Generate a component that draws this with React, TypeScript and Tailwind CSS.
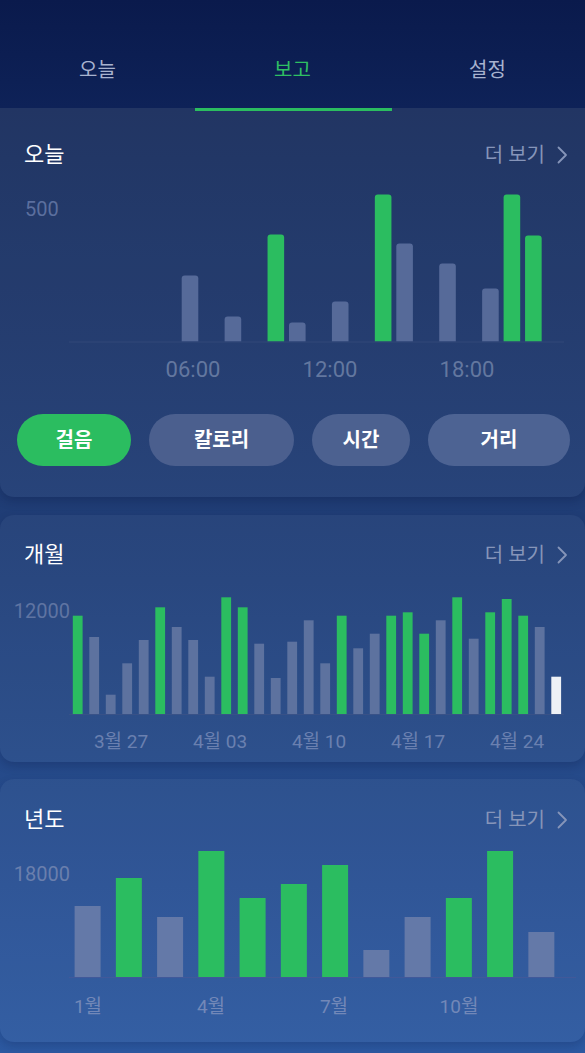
import React from "react";

const FONT = "Roboto, 'Noto Sans CJK KR', sans-serif";

const GREEN = "#2bbd60";

function topRounded(x: number, yTop: number, w: number, yBottom: number, r: number) {
  return `M${x},${yBottom} V${yTop + r} Q${x},${yTop} ${x + r},${yTop} H${x + w - r} Q${x + w},${yTop} ${x + w},${yTop + r} V${yBottom} Z`;
}

function Chevron() {
  return (
    <svg width="11" height="18" viewBox="0 0 11 18" className="ml-[12px]">
      <polyline points="1.5,1.5 9,9 1.5,16.5" fill="none" stroke="#8695b9" strokeWidth="1.8" strokeLinecap="round" strokeLinejoin="round" />
    </svg>
  );
}

function CardHeader({ title, pt }: { title: string; pt: string }) {
  return (
    <div className={`flex items-center justify-between pl-[24px] pr-[17px] ${pt}`}>
      <span className="text-[22px] leading-[30px] text-white">{title}</span>
      <span className="flex items-center text-[20px] leading-[30px] text-[#8695b9]">
        더 보기
        <Chevron />
      </span>
    </div>
  );
}

const todayBars: { h: number; v: number; g: boolean }[] = [
  { h: 5, v: 66, g: false },
  { h: 7, v: 25, g: false },
  { h: 9, v: 107, g: true },
  { h: 10, v: 19, g: false },
  { h: 12, v: 40, g: false },
  { h: 14, v: 147, g: true },
  { h: 15, v: 98, g: false },
  { h: 17, v: 78, g: false },
  { h: 19, v: 53, g: false },
  { h: 20, v: 147, g: true },
  { h: 21, v: 106, g: true },
];

function TodayChart() {
  const base = 171.5;
  return (
    <svg width="585" height="220" viewBox="0 0 585 220" className="block">
      <text x="25" y="46" fontSize="20" fill="#5b6f9e" fontFamily={FONT}>500</text>
      {todayBars.map((b, i) => {
        const x = 181.7 + 21.46 * (b.h - 5);
        return (
          <path key={i} d={topRounded(x, base - b.v, 16.6, base, 3)} fill={b.g ? GREEN : "#566a99"} />
        );
      })}
      <line x1="69" y1={base + 0.5} x2="564" y2={base + 0.5} stroke="#324879" strokeWidth="1" />
      {[
        ["06:00", 193],
        ["12:00", 330],
        ["18:00", 467],
      ].map(([t, x]) => (
        <text key={t as string} x={x as number} y="207" fontSize="22" textAnchor="middle" fill="#63779f" fontFamily={FONT}>
          {t}
        </text>
      ))}
    </svg>
  );
}

const monthH = [98.6, 77.3, 19.6, 51, 74.3, 107, 87.3, 74.3, 37.6, 117, 107, 70.6, 36.3, 72.6, 94, 51, 98.6, 66, 80.6, 98.6, 102, 80.6, 94, 117, 75.6, 102, 115.3, 98.6, 87.3, 37.6];
const monthC = "GggggGgggGGgggggGggGGGgGgGGGgW";

function MonthChart() {
  const base = 144.3;
  return (
    <svg width="585" height="192" viewBox="0 0 585 192" className="block">
      <text x="70" y="48" fontSize="20" textAnchor="end" fill="#5f74a2" fontFamily={FONT}>12000</text>
      {monthH.map((h, i) => {
        const c = monthC[i];
        return (
          <rect
            key={i}
            x={72.8 + 16.5 * i}
            y={base - h}
            width="9.8"
            height={h}
            fill={c === "G" ? GREEN : c === "W" ? "#eef1f6" : "#5d729f"}
          />
        );
      })}
      <line x1="69" y1={base + 0.3} x2="564" y2={base + 0.3} stroke="#3a5287" strokeWidth="1" />
      {[
        ["3월 27", 121],
        ["4월 03", 220],
        ["4월 10", 319],
        ["4월 17", 418],
        ["4월 24", 517],
      ].map(([t, x]) => (
        <text key={t as string} x={x as number} y="178" fontSize="19" textAnchor="middle" fill="#6a80b0" fontFamily={FONT}>
          {t}
        </text>
      ))}
    </svg>
  );
}

const yearH = [71, 99, 60, 126, 79, 93, 112, 27, 60, 79, 126, 45];
const yearC = "gGgGGGGggGGg";

function YearChart() {
  const base = 142;
  return (
    <svg width="585" height="207" viewBox="0 0 585 207" className="block">
      <text x="70" y="46" fontSize="20" textAnchor="end" fill="#6a7fad" fontFamily={FONT}>18000</text>
      {yearH.map((h, i) => (
        <rect
          key={i}
          x={74.6 + 41.25 * i}
          y={base - h}
          width="26"
          height={h}
          fill={yearC[i] === "G" ? GREEN : "#6479a8"}
        />
      ))}
      <line x1="69" y1={base + 0.5} x2="576" y2={base + 0.5} stroke="#41599a" strokeWidth="1" />
      {[
        ["1월", 88],
        ["4월", 211],
        ["7월", 334],
        ["10월", 459],
      ].map(([t, x]) => (
        <text key={t as string} x={x as number} y="177.5" fontSize="19" textAnchor="middle" fill="#7288b8" fontFamily={FONT}>
          {t}
        </text>
      ))}
    </svg>
  );
}

export default function App() {
  return (
    <div className="w-[585px] min-h-[1053px] overflow-hidden font-[Roboto,'Noto_Sans_CJK_KR',sans-serif]">
      <header className="relative z-10 grid h-[108px] grid-cols-3 bg-gradient-to-b from-[#0a1a4c] to-[#0e2258]">
        <div className="flex items-center justify-center pt-[32px] text-[20px] text-[#a8b3cf]">오늘</div>
        <div className="relative flex items-center justify-center pt-[32px] text-[20px] text-[#2fbf63]">
          보고
          <div className="absolute -bottom-[3px] left-0 right-[-2px] h-[3px] bg-[#2bbd60]" />
        </div>
        <div className="flex items-center justify-center pt-[32px] text-[20px] text-[#a8b3cf]">설정</div>
      </header>

      <main className="flex min-h-[945px] flex-col bg-gradient-to-b from-[#192d5d] via-[#21407a] to-[#2c59a1] pb-[11px]">
        <section className="rounded-b-[14px] bg-white/[0.04] pb-[31px] shadow-[0_4px_10px_rgba(8,20,60,0.25)]">
          <CardHeader title="오늘" pt="pt-[32px]" />
          <TodayChart />
          <div className="mt-[24px] flex gap-[18px] pl-[17px] pr-[15px]">
            <button className="h-[52px] w-[114px] rounded-full bg-[#2bbd60] text-[20px] font-bold text-white">걸음</button>
            <button className="h-[52px] w-[145px] rounded-full bg-[#4b5f8e] text-[20px] font-bold text-white">칼로리</button>
            <button className="h-[52px] w-[98px] rounded-full bg-[#4c6190] text-[20px] font-bold text-white">시간</button>
            <button className="h-[52px] flex-1 rounded-full bg-[#4d6393] text-[20px] font-bold text-white">거리</button>
          </div>
        </section>

        <section className="mt-[18px] h-[247px] rounded-[14px] bg-white/[0.04] shadow-[0_4px_10px_rgba(8,20,60,0.22)]">
          <CardHeader title="개월" pt="pt-[25px]" />
          <MonthChart />
        </section>

        <section className="mt-[17px] h-[263px] rounded-[14px] bg-white/[0.04] shadow-[0_4px_10px_rgba(8,20,60,0.2)]">
          <CardHeader title="년도" pt="pt-[26px]" />
          <YearChart />
        </section>
      </main>
    </div>
  );
}
